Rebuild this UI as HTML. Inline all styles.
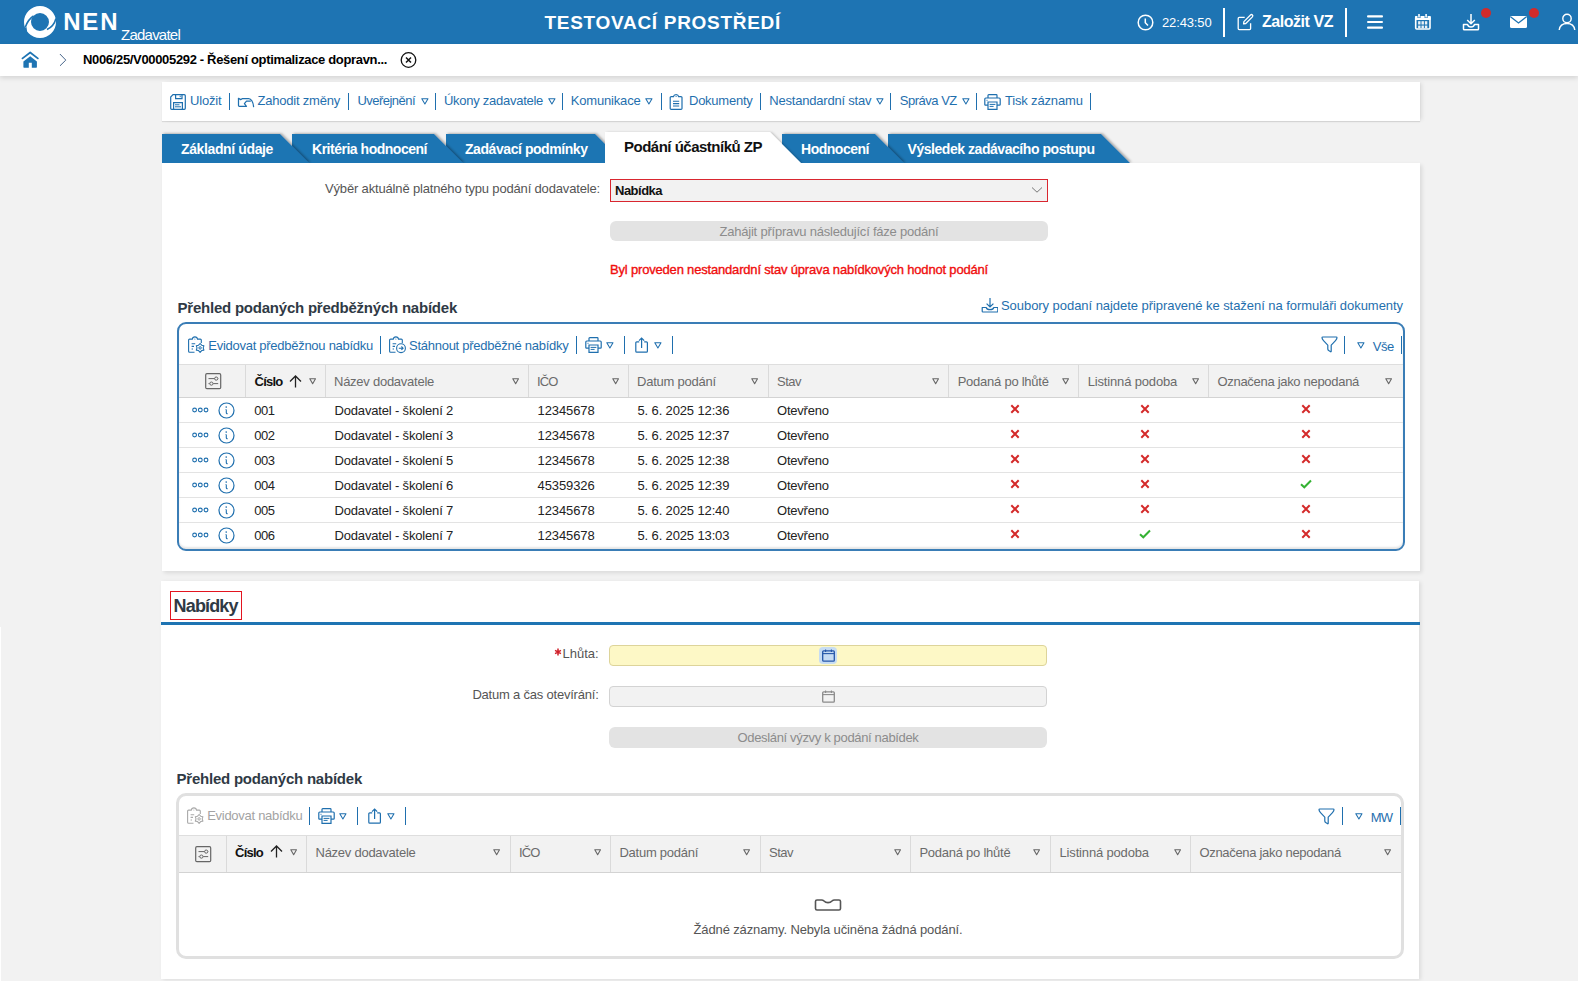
<!DOCTYPE html>
<html lang="cs"><head><meta charset="utf-8"><title>NEN</title>
<style>
html,body{margin:0;padding:0}
body{width:1578px;height:981px;overflow:hidden;position:relative;background:#f2f2f2;font-family:"Liberation Sans",sans-serif;}
.a{position:absolute;display:block}
.t{position:absolute;line-height:1;white-space:nowrap}
</style></head><body>
<div class="a" style="left:0px;top:0px;width:1578px;height:44px;background:#1e74b3"></div>
<svg class="a" style="left:22px;top:4px" width="36" height="36" viewBox="0 0 36 36"><circle cx="18" cy="18" r="12.5" fill="none" stroke="#fff" stroke-width="7"/>
<path d="M3.2 23.5 C5 18 7.5 14.5 11.5 12" fill="none" stroke="#1e74b3" stroke-width="1.6"/>
<path d="M34 14.5 C32.5 20 29.5 23.5 25 25.5" fill="none" stroke="#1e74b3" stroke-width="1.6"/>
<path d="M1.5 25 L4.5 23 L5.5 31 Z" fill="#1e74b3"/></svg>
<div class="t" style="left:63.2px;top:10px;font-size:24px;color:#fff;font-weight:bold;letter-spacing:1.8px;">NEN</div>
<div class="t" style="left:121.0px;top:27px;font-size:15px;color:#fff;letter-spacing:-0.764px;">Zadavatel</div>
<div class="t" style="left:544.5px;top:13px;font-size:19px;color:#fff;font-weight:bold;letter-spacing:0.705px;">TESTOVACÍ PROSTŘEDÍ</div>
<svg class="a" style="left:1137px;top:14px" width="17" height="17" viewBox="0 0 17 17"><circle cx="8.5" cy="8.5" r="7.3" fill="none" stroke="#fff" stroke-width="1.5"/><path d="M8.3 4.5 V8.7 L11 11.6" fill="none" stroke="#fff" stroke-width="1.5"/></svg>
<div class="t" style="left:1162.0px;top:16px;font-size:13px;color:#fff;letter-spacing:-0.138px;">22:43:50</div>
<div class="a" style="left:1223px;top:8px;width:2px;height:29px;background:#fff"></div>
<svg class="a" style="left:1232px;top:10px" width="26" height="24" viewBox="0 0 26 24"><path d="M12.7 7.4 H7.2 Q6.2 7.4 6.2 8.4 V18.6 Q6.2 19.6 7.2 19.6 H17.6 Q18.6 19.6 18.6 18.6 V13.2" fill="none" stroke="#fff" stroke-width="1.3"/><path d="M11.6 13.9 L11.9 11.6 L18.5 5 Q19.5 4.1 20.4 5 Q21.3 5.9 20.4 6.9 L13.8 13.5 Z" fill="none" stroke="#fff" stroke-width="1.3" stroke-linejoin="round"/></svg>
<div class="t" style="left:1262.0px;top:14px;font-size:16px;color:#fff;font-weight:bold;letter-spacing:-0.455px;">Založit VZ</div>
<div class="a" style="left:1345px;top:8px;width:2px;height:29px;background:#fff"></div>
<svg class="a" style="left:1367px;top:14px" width="17" height="16" viewBox="0 0 17 16"><rect x="0" y="1.2" width="16" height="2.2" rx="1" fill="#fff"/><rect x="0" y="6.9" width="16" height="2.2" rx="1" fill="#fff"/><rect x="0" y="12.6" width="16" height="2.2" rx="1" fill="#fff"/></svg>
<svg class="a" style="left:1410px;top:10px" width="26" height="24" viewBox="0 0 26 24"><rect x="5.7" y="6.7" width="14.3" height="12.3" rx="1" fill="none" stroke="#fff" stroke-width="1.6"/><rect x="5" y="6" width="15.8" height="4" rx="0.8" fill="#fff"/><path d="M9 3.8 V8 M16.1 3.8 V8" stroke="#1e74b3" stroke-width="3"/><path d="M9 3.9 V7.6 M16.1 3.9 V7.6" stroke="#fff" stroke-width="1.6"/><rect x="8.1" y="11.2" width="2.4" height="3.3" fill="#fff" opacity="0.9"/><rect x="8.1" y="15.6" width="2.4" height="2.6" fill="#fff" opacity="0.9"/><rect x="11.5" y="11.2" width="2.4" height="3.3" fill="#fff" opacity="0.9"/><rect x="11.5" y="15.6" width="2.4" height="2.6" fill="#fff" opacity="0.9"/><rect x="14.9" y="11.2" width="2.4" height="3.3" fill="#fff" opacity="0.9"/><rect x="14.9" y="15.6" width="2.4" height="2.6" fill="#fff" opacity="0.9"/></svg>
<svg class="a" style="left:1462px;top:13px" width="18" height="18" viewBox="0 0 18 18"><path d="M9 1 V10.5 M5.2 7 L9 10.8 L12.8 7" fill="none" stroke="#fff" stroke-width="1.5"/><path d="M1.5 11.5 V16 Q1.5 16.8 2.3 16.8 H15.7 Q16.5 16.8 16.5 16 V11.5 H12.5 Q11.8 14 9 14 Q6.2 14 5.5 11.5 Z" fill="none" stroke="#fff" stroke-width="1.5" stroke-linejoin="round"/></svg>
<svg class="a" style="left:1480px;top:7px" width="12" height="12" viewBox="0 0 12 12"><circle cx="6" cy="6" r="5" fill="#d12b2b"/></svg>
<svg class="a" style="left:1509px;top:15px" width="19" height="14" viewBox="0 0 19 14"><rect x="1" y="1" width="17" height="12" rx="1.5" fill="#fff"/><path d="M1.5 1.8 L9.5 8 L17.5 1.8" fill="none" stroke="#1e74b3" stroke-width="1.3"/></svg>
<svg class="a" style="left:1528px;top:7px" width="12" height="12" viewBox="0 0 12 12"><circle cx="6" cy="6" r="5" fill="#d12b2b"/></svg>
<svg class="a" style="left:1558px;top:13px" width="18" height="18" viewBox="0 0 18 18"><circle cx="9" cy="5.5" r="4.2" fill="none" stroke="#fff" stroke-width="1.4"/><path d="M1.2 17 Q2 10.5 9 10.5 Q16 10.5 16.8 17" fill="none" stroke="#fff" stroke-width="1.4"/></svg>
<div class="a" style="left:0px;top:44px;width:1578px;height:32px;background:#fff;box-shadow:0 2px 5px rgba(0,0,0,0.13)"></div>
<svg class="a" style="left:21px;top:50px" width="18" height="19" viewBox="0 0 18 19"><path d="M1.5 8.4 L9.2 2.5 L16.8 8.4" fill="none" stroke="#1e74b3" stroke-width="1.8" stroke-linecap="round" stroke-linejoin="round"/><path d="M2.4 11.4 L9.2 6.2 L15.9 11.4 V17.1 Q15.9 17.7 15.3 17.7 H10.8 V12.7 H7.8 V17.7 H3 Q2.4 17.7 2.4 17.1 Z" fill="#1e74b3"/></svg>
<svg class="a" style="left:58px;top:52px" width="10" height="16" viewBox="0 0 10 16"><path d="M1.9 2 L7.8 8.1 L2 13.8" fill="none" stroke="#46658a" stroke-width="1"/></svg>
<div class="t" style="left:83.0px;top:53px;font-size:13px;color:#000;font-weight:bold;letter-spacing:-0.336px;">N006/25/V00005292 - Řešení optimalizace dopravn...</div>
<svg class="a" style="left:400px;top:52px" width="17" height="17" viewBox="0 0 17 17"><circle cx="8.5" cy="8" r="7.3" fill="none" stroke="#111" stroke-width="1.3"/><path d="M6 5.5 L11 10.5 M11 5.5 L6 10.5" stroke="#111" stroke-width="1.5"/></svg>
<div class="a" style="left:162px;top:82px;width:1258px;height:39px;background:#fff;box-shadow:0 1px 1px rgba(0,0,0,0.10),3px 0 4px -1px rgba(0,0,0,0.09)"></div>
<div class="a" style="left:162px;top:163px;width:1258px;height:408px;background:#fff;box-shadow:2px 2px 4px rgba(0,0,0,0.10)"></div>
<div class="a" style="left:161px;top:581px;width:1258px;height:398px;background:#fff;box-shadow:2px 1px 4px rgba(0,0,0,0.09)"></div>
<div class="a" style="left:0px;top:627px;width:1px;height:354px;background:#fff"></div>
<svg class="a" style="left:170px;top:94px" width="16" height="16" viewBox="0 0 16 16"><path d="M3 0.7 H14.3 Q15.3 0.7 15.3 1.7 V14.3 Q15.3 15.3 14.3 15.3 H1.7 Q0.7 15.3 0.7 14.3 V3 Z" fill="none" stroke="#1f6fae" stroke-width="1.2"/><path d="M5.6 0.7 V4.6 H12 V0.7" fill="none" stroke="#1f6fae" stroke-width="1.2"/><path d="M10.2 1.6 V3.2" stroke="#1f6fae" stroke-width="1"/><path d="M3.6 15.3 V8.6 H12.4 V15.3" fill="none" stroke="#1f6fae" stroke-width="1.2"/><path d="M5 10.8 H9.5 M5 12.8 H11" stroke="#1f6fae" stroke-width="1"/></svg>
<div class="t" style="left:190.0px;top:94px;font-size:13px;color:#1f6fae;letter-spacing:-0.167px;">Uložit</div>
<div class="a" style="left:229px;top:93px;width:1.4px;height:17px;background:#1f6fae"></div>
<svg class="a" style="left:232px;top:90px" width="28" height="22" viewBox="0 0 28 22"><path d="M6.5 8.3 L8.6 9.6 L10.6 8.5 H16.5 Q20.8 9.3 21.6 16.6" fill="none" stroke="#1f6fae" stroke-width="1.25" stroke-linejoin="round" stroke-linecap="round"/><path d="M18.8 11.2 H14.5 L12.4 13.6 L14.5 16.3 H7.3 Q6.5 16.3 6.5 15.5 V8.3" fill="none" stroke="#1f6fae" stroke-width="1.25" stroke-linejoin="round"/></svg>
<div class="t" style="left:257.5px;top:94px;font-size:13px;color:#1f6fae;letter-spacing:-0.212px;">Zahodit změny</div>
<div class="a" style="left:348px;top:93px;width:1.4px;height:17px;background:#1f6fae"></div>
<div class="t" style="left:357.5px;top:94px;font-size:13px;color:#1f6fae;letter-spacing:-0.537px;">Uveřejnění</div>
<svg class="a" style="left:421px;top:98px" width="8" height="7" viewBox="0 0 8 7"><path d="M0.8 0.8 H7 L3.90 6 Z" fill="none" stroke="#1f6fae" stroke-width="1.05" stroke-linejoin="round"/></svg>
<div class="a" style="left:435px;top:93px;width:1.4px;height:17px;background:#1f6fae"></div>
<div class="t" style="left:444.0px;top:94px;font-size:13px;color:#1f6fae;letter-spacing:-0.271px;">Úkony zadavatele</div>
<svg class="a" style="left:548px;top:98px" width="8" height="7" viewBox="0 0 8 7"><path d="M0.8 0.8 H7 L3.90 6 Z" fill="none" stroke="#1f6fae" stroke-width="1.05" stroke-linejoin="round"/></svg>
<div class="a" style="left:562px;top:93px;width:1.4px;height:17px;background:#1f6fae"></div>
<div class="t" style="left:570.8px;top:94px;font-size:13px;color:#1f6fae;letter-spacing:-0.184px;">Komunikace</div>
<svg class="a" style="left:645px;top:98px" width="8" height="7" viewBox="0 0 8 7"><path d="M0.8 0.8 H7 L3.90 6 Z" fill="none" stroke="#1f6fae" stroke-width="1.05" stroke-linejoin="round"/></svg>
<div class="a" style="left:660.5px;top:93px;width:1.4px;height:17px;background:#1f6fae"></div>
<svg class="a" style="left:669px;top:94px" width="15" height="16" viewBox="0 0 15 16"><path d="M4.5 2.6 H2.2 Q1.2 2.6 1.2 3.6 V14.6 Q1.2 15.4 2.2 15.4 H12 Q13 15.4 13 14.6 V3.6 Q13 2.6 12 2.6 H9.6 Q9.3 0.6 7.1 0.6 Q4.8 0.6 4.5 2.6 Z" fill="none" stroke="#1f6fae" stroke-width="1.2"/><path d="M4 7.2 H10.2 M4 9.6 H10.2 M4 12 H10.2" stroke="#1f6fae" stroke-width="1.1"/><circle cx="7.1" cy="2.5" r="0.6" fill="#1f6fae"/></svg>
<div class="t" style="left:689.0px;top:94px;font-size:13px;color:#1f6fae;letter-spacing:-0.250px;">Dokumenty</div>
<div class="a" style="left:760px;top:93px;width:1.4px;height:17px;background:#1f6fae"></div>
<div class="t" style="left:769.3px;top:94px;font-size:13px;color:#1f6fae;letter-spacing:-0.206px;">Nestandardní stav</div>
<svg class="a" style="left:876px;top:98px" width="8" height="7" viewBox="0 0 8 7"><path d="M0.8 0.8 H7 L3.90 6 Z" fill="none" stroke="#1f6fae" stroke-width="1.05" stroke-linejoin="round"/></svg>
<div class="a" style="left:890px;top:93px;width:1.4px;height:17px;background:#1f6fae"></div>
<div class="t" style="left:899.8px;top:94px;font-size:13px;color:#1f6fae;letter-spacing:-0.490px;">Správa VZ</div>
<svg class="a" style="left:962px;top:98px" width="8" height="7" viewBox="0 0 8 7"><path d="M0.8 0.8 H7 L3.90 6 Z" fill="none" stroke="#1f6fae" stroke-width="1.05" stroke-linejoin="round"/></svg>
<div class="a" style="left:976px;top:93px;width:1.4px;height:17px;background:#1f6fae"></div>
<svg class="a" style="left:984px;top:94px" width="17" height="16" viewBox="0 0 17 16"><path d="M4 4 V1.5 Q4 0.7 4.8 0.7 H12.2 Q13 0.7 13 1.5 V4" fill="none" stroke="#1f6fae" stroke-width="1.2"/><path d="M4 11.2 H1.6 Q0.8 11.2 0.8 10.4 V5 Q0.8 4 1.8 4 H15.2 Q16.2 4 16.2 5 V10.4 Q16.2 11.2 15.4 11.2 H13" fill="none" stroke="#1f6fae" stroke-width="1.2"/><path d="M4 8 H13 V15.3 H4 Z" fill="none" stroke="#1f6fae" stroke-width="1.2"/><path d="M5.6 10.4 H11.4 M5.6 12.4 H9.6 M2.5 6.3 H3.5" stroke="#1f6fae" stroke-width="1"/></svg>
<div class="t" style="left:1005.0px;top:94px;font-size:13px;color:#1f6fae;letter-spacing:-0.167px;">Tisk záznamu</div>
<div class="a" style="left:1089.5px;top:93px;width:1.4px;height:17px;background:#1f6fae"></div>
<svg class="a" style="left:150px;top:124px" width="1000" height="39" viewBox="0 0 1000 39"><defs><filter id="ts" x="-10%" y="-30%" width="130%" height="160%"><feDropShadow dx="1.6" dy="-0.6" stdDeviation="1.1" flood-color="#000" flood-opacity="0.32"/></filter><filter id="ta" x="-10%" y="-30%" width="130%" height="160%"><feDropShadow dx="1.8" dy="0.3" stdDeviation="1" flood-color="#000" flood-opacity="0.22"/></filter></defs><polygon points="738,10 951,10 980,39 738,39" fill="#1e74b3" filter="url(#ts)"/><polygon points="632,10 725,10 754,39 632,39" fill="#1e74b3" filter="url(#ts)"/><polygon points="296,10 445,10 474,39 296,39" fill="#1e74b3" filter="url(#ts)"/><polygon points="142,10 284,10 313,39 142,39" fill="#1e74b3" filter="url(#ts)"/><polygon points="12,10 130,10 159,39 12,39" fill="#1e74b3" filter="url(#ts)"/><polygon points="455,8 620,8 651,39 455,39" fill="#fff" filter="url(#ta)"/></svg>
<div class="a" style="left:162px;top:163px;width:1258px;height:3px;background:#fff"></div>
<div class="t" style="left:181.0px;top:142px;font-size:14px;color:#fff;font-weight:bold;letter-spacing:-0.375px;">Základní údaje</div>
<div class="t" style="left:312.0px;top:142px;font-size:14px;color:#fff;font-weight:bold;letter-spacing:-0.482px;">Kritéria hodnocení</div>
<div class="t" style="left:465.0px;top:142px;font-size:14px;color:#fff;font-weight:bold;letter-spacing:-0.437px;">Zadávací podmínky</div>
<div class="t" style="left:801.0px;top:142px;font-size:14px;color:#fff;font-weight:bold;letter-spacing:-0.481px;">Hodnocení</div>
<div class="t" style="left:907.5px;top:142px;font-size:14px;color:#fff;font-weight:bold;letter-spacing:-0.451px;">Výsledek zadávacího postupu</div>
<div class="t" style="left:624.0px;top:139px;font-size:15px;color:#111;font-weight:bold;letter-spacing:-0.501px;">Podání účastníků ZP</div>
<div class="t" style="left:325.0px;top:181.5px;font-size:13px;color:#555;letter-spacing:-0.162px;">Výběr aktuálně platného typu podání dodavatele:</div>
<div class="a" style="left:610px;top:179px;width:438px;height:23px;background:#f2f2f2;border:1.5px solid #d9262f;box-sizing:border-box"></div>
<div class="t" style="left:615.0px;top:184px;font-size:13px;color:#111;font-weight:bold;letter-spacing:-0.510px;">Nabídka</div>
<svg class="a" style="left:1031px;top:186px" width="12" height="8" viewBox="0 0 12 8"><path d="M1 1.5 L6 6.2 L11 1.5" fill="none" stroke="#777" stroke-width="1"/></svg>
<div class="a" style="left:610px;top:221px;width:438px;height:20px;background:#e3e3e3;border-radius:6px"></div>
<div class="t" style="left:719.5px;top:224.5px;font-size:13px;color:#8c8c8c;letter-spacing:-0.216px;">Zahájit přípravu následující fáze podání</div>
<div class="t" style="left:610.0px;top:263px;font-size:13px;color:#f00d0d;letter-spacing:-0.183px;-webkit-text-stroke:0.35px #f00d0d;">Byl proveden nestandardní stav úprava nabídkových hodnot podání</div>
<div class="t" style="left:177.5px;top:300px;font-size:15px;color:#2f3a45;font-weight:bold;letter-spacing:-0.224px;">Přehled podaných předběžných nabídek</div>
<svg class="a" style="left:981px;top:297px" width="17" height="16" viewBox="0 0 17 16"><path d="M9 1 V9.8 M5.6 6.6 L9 10 L12.4 6.6" fill="none" stroke="#1f6fae" stroke-width="1.2"/><path d="M1.2 10.5 V14.2 Q1.2 15 2 15 H16 Q16.8 15 16.8 14.2 V10.5 H12.8 Q12.2 12.7 9 12.7 Q5.8 12.7 5.2 10.5 Z" fill="none" stroke="#1f6fae" stroke-width="1.2" stroke-linejoin="round"/></svg>
<div class="t" style="left:1001.0px;top:299px;font-size:13px;color:#1f6fae;letter-spacing:-0.051px;">Soubory podaní najdete připravené ke stažení na formuláři dokumenty</div>
<div class="a" style="left:177px;top:322px;width:1228px;height:229px;border:2px solid #3a7db6;border-radius:9px;box-sizing:border-box;background:#fff;box-shadow:inset 0 -2px 2px rgba(0,0,0,0.10)"></div>
<svg class="a" style="left:187.5px;top:336px" width="18" height="18" viewBox="0 0 18 18"><path d="M6.5 16.3 H1.6 Q0.6 16.3 0.6 15.3 V4.1 Q0.6 3.1 1.6 3.1 H4.3 Q4.6 0.9 6.9 0.9 Q9.2 0.9 9.5 3.1 H12.3 Q13.3 3.1 13.3 4.1 V7" fill="none" stroke="#1f6fae" stroke-width="1.1"/><circle cx="6.9" cy="2.9" r="0.5" fill="#1f6fae"/><path d="M3.6 7.7 H7.2 M3.6 10.4 H6 M3.6 13 H5" stroke="#1f6fae" stroke-width="1.1"/><polygon points="12.10,7.50 13.65,9.22 15.91,9.70 15.20,11.90 15.91,14.10 13.65,14.58 12.10,16.30 10.55,14.58 8.29,14.10 9.00,11.90 8.29,9.70 10.55,9.22" fill="#fff" stroke="#1f6fae" stroke-width="1.1" stroke-linejoin="round"/><circle cx="12.1" cy="11.9" r="1.2" fill="none" stroke="#1f6fae" stroke-width="1"/></svg>
<div class="t" style="left:208.3px;top:338.5px;font-size:13px;color:#1f6fae;letter-spacing:-0.271px;">Evidovat předběžnou nabídku</div>
<div class="a" style="left:380px;top:336px;width:1.4px;height:18px;background:#1f6fae"></div>
<svg class="a" style="left:388.5px;top:336px" width="18" height="18" viewBox="0 0 18 18"><path d="M6.5 16.3 H1.6 Q0.6 16.3 0.6 15.3 V4.1 Q0.6 3.1 1.6 3.1 H4.3 Q4.6 0.9 6.9 0.9 Q9.2 0.9 9.5 3.1 H12.3 Q13.3 3.1 13.3 4.1 V7" fill="none" stroke="#1f6fae" stroke-width="1.1"/><circle cx="6.9" cy="2.9" r="0.5" fill="#1f6fae"/><path d="M3.6 7.7 H7.2 M3.6 10.4 H6 M3.6 13 H5" stroke="#1f6fae" stroke-width="1.1"/><circle cx="12" cy="12.2" r="4.4" fill="#fff" stroke="#1f6fae" stroke-width="1.1"/><path d="M9.8 12.2 H14 M12.4 10.5 L14.1 12.2 L12.4 13.9" fill="none" stroke="#1f6fae" stroke-width="1.1"/></svg>
<div class="t" style="left:409.0px;top:338.5px;font-size:13px;color:#1f6fae;letter-spacing:-0.259px;">Stáhnout předběžné nabídky</div>
<div class="a" style="left:576px;top:336px;width:1.4px;height:18px;background:#1f6fae"></div>
<svg class="a" style="left:585px;top:337px" width="17" height="16" viewBox="0 0 17 16"><path d="M4 4 V1.5 Q4 0.7 4.8 0.7 H12.2 Q13 0.7 13 1.5 V4" fill="none" stroke="#1f6fae" stroke-width="1.2"/><path d="M4 11.2 H1.6 Q0.8 11.2 0.8 10.4 V5 Q0.8 4 1.8 4 H15.2 Q16.2 4 16.2 5 V10.4 Q16.2 11.2 15.4 11.2 H13" fill="none" stroke="#1f6fae" stroke-width="1.2"/><path d="M4 8 H13 V15.3 H4 Z" fill="none" stroke="#1f6fae" stroke-width="1.2"/><path d="M5.6 10.4 H11.4 M5.6 12.4 H9.6 M2.5 6.3 H3.5" stroke="#1f6fae" stroke-width="1"/></svg>
<svg class="a" style="left:606px;top:342px" width="8" height="7" viewBox="0 0 8 7"><path d="M0.8 0.8 H7 L3.90 6 Z" fill="none" stroke="#1f6fae" stroke-width="1.05" stroke-linejoin="round"/></svg>
<div class="a" style="left:624px;top:336px;width:1.4px;height:18px;background:#1f6fae"></div>
<svg class="a" style="left:634.5px;top:337px" width="14" height="16" viewBox="0 0 14 16"><path d="M4.2 4.8 H1.8 Q0.8 4.8 0.8 5.8 V14.2 Q0.8 15.2 1.8 15.2 H11.4 Q12.4 15.2 12.4 14.2 V5.8 Q12.4 4.8 11.4 4.8 H9.2" fill="none" stroke="#1f6fae" stroke-width="1.2"/><path d="M6.6 11 V1 M4 3.6 L6.6 1 L9.2 3.6" fill="none" stroke="#1f6fae" stroke-width="1.2"/></svg>
<svg class="a" style="left:653.5px;top:342px" width="8" height="7" viewBox="0 0 8 7"><path d="M0.8 0.8 H7 L3.90 6 Z" fill="none" stroke="#1f6fae" stroke-width="1.05" stroke-linejoin="round"/></svg>
<div class="a" style="left:672px;top:336px;width:1.4px;height:18px;background:#1f6fae"></div>
<svg class="a" style="left:1320.5px;top:336px" width="17" height="17" viewBox="0 0 17 17"><path d="M1 1.8 Q1 1 1.8 1 H15.2 Q16 1 16 1.8 Q16 3 14.5 4.6 L10.2 9.2 V15.2 Q10.2 16.2 9.3 15.6 L7.7 14.6 Q6.8 14 6.8 13 V9.2 L2.5 4.6 Q1 3 1 1.8 Z" fill="none" stroke="#1f6fae" stroke-width="1.2"/></svg>
<div class="a" style="left:1344px;top:336px;width:1.4px;height:18px;background:#1f6fae"></div>
<svg class="a" style="left:1357px;top:342px" width="8" height="7" viewBox="0 0 8 7"><path d="M0.8 0.8 H7 L3.90 6 Z" fill="none" stroke="#1f6fae" stroke-width="1.05" stroke-linejoin="round"/></svg>
<div class="t" style="left:1372.7px;top:340px;font-size:13px;color:#1f6fae;letter-spacing:-0.367px;">Vše</div>
<div class="a" style="left:1401px;top:336px;width:1.4px;height:18px;background:#1f6fae"></div>
<div class="a" style="left:179px;top:364px;width:1224px;height:34px;background:#f2f2f2;border-top:1px solid #dedede;border-bottom:1px solid #d3d3d3;box-sizing:border-box"></div>
<div class="a" style="left:245px;top:365px;width:1px;height:32px;background:#dadada"></div>
<div class="a" style="left:325px;top:365px;width:1px;height:32px;background:#dadada"></div>
<div class="a" style="left:528px;top:365px;width:1px;height:32px;background:#dadada"></div>
<div class="a" style="left:628px;top:365px;width:1px;height:32px;background:#dadada"></div>
<div class="a" style="left:768px;top:365px;width:1px;height:32px;background:#dadada"></div>
<div class="a" style="left:948px;top:365px;width:1px;height:32px;background:#dadada"></div>
<div class="a" style="left:1078px;top:365px;width:1px;height:32px;background:#dadada"></div>
<div class="a" style="left:1208px;top:365px;width:1px;height:32px;background:#dadada"></div>
<svg class="a" style="left:205px;top:373px" width="17" height="17" viewBox="0 0 17 17"><rect x="0.7" y="0.7" width="15" height="15" rx="1.2" fill="none" stroke="#666" stroke-width="1.2"/><path d="M3.5 5.6 H9.6 M13 5.6 H13.2 M3.5 10.6 H4.6 M8.2 10.6 H13.2" stroke="#666" stroke-width="1"/><circle cx="11.2" cy="5.6" r="1.6" fill="none" stroke="#666" stroke-width="1"/><circle cx="6.4" cy="10.6" r="1.6" fill="none" stroke="#666" stroke-width="1"/></svg>
<div class="t" style="left:254.5px;top:375px;font-size:13px;color:#111;font-weight:bold;letter-spacing:-0.757px;">Číslo</div>
<svg class="a" style="left:308.5px;top:378px" width="7.5" height="6.8" viewBox="0 0 7.5 6.8"><path d="M0.8 0.8 H6.5 L3.65 5.8 Z" fill="none" stroke="#666" stroke-width="1.1" stroke-linejoin="round"/></svg>
<div class="t" style="left:334.0px;top:375px;font-size:13px;color:#6b6b6b;letter-spacing:-0.254px;">Název dodavatele</div>
<svg class="a" style="left:511.7px;top:378px" width="7.5" height="6.8" viewBox="0 0 7.5 6.8"><path d="M0.8 0.8 H6.5 L3.65 5.8 Z" fill="none" stroke="#666" stroke-width="1.1" stroke-linejoin="round"/></svg>
<div class="t" style="left:537.0px;top:375px;font-size:13px;color:#6b6b6b;letter-spacing:-0.904px;">IČO</div>
<svg class="a" style="left:612px;top:378px" width="7.5" height="6.8" viewBox="0 0 7.5 6.8"><path d="M0.8 0.8 H6.5 L3.65 5.8 Z" fill="none" stroke="#666" stroke-width="1.1" stroke-linejoin="round"/></svg>
<div class="t" style="left:637.0px;top:375px;font-size:13px;color:#6b6b6b;letter-spacing:-0.239px;">Datum podání</div>
<svg class="a" style="left:751px;top:378px" width="7.5" height="6.8" viewBox="0 0 7.5 6.8"><path d="M0.8 0.8 H6.5 L3.65 5.8 Z" fill="none" stroke="#666" stroke-width="1.1" stroke-linejoin="round"/></svg>
<div class="t" style="left:777.0px;top:375px;font-size:13px;color:#6b6b6b;letter-spacing:-0.503px;">Stav</div>
<svg class="a" style="left:932px;top:378px" width="7.5" height="6.8" viewBox="0 0 7.5 6.8"><path d="M0.8 0.8 H6.5 L3.65 5.8 Z" fill="none" stroke="#666" stroke-width="1.1" stroke-linejoin="round"/></svg>
<div class="t" style="left:957.7px;top:375px;font-size:13px;color:#6b6b6b;letter-spacing:-0.246px;">Podaná po lhůtě</div>
<svg class="a" style="left:1061.6px;top:378px" width="7.5" height="6.8" viewBox="0 0 7.5 6.8"><path d="M0.8 0.8 H6.5 L3.65 5.8 Z" fill="none" stroke="#666" stroke-width="1.1" stroke-linejoin="round"/></svg>
<div class="t" style="left:1087.7px;top:375px;font-size:13px;color:#6b6b6b;letter-spacing:-0.160px;">Listinná podoba</div>
<svg class="a" style="left:1192px;top:378px" width="7.5" height="6.8" viewBox="0 0 7.5 6.8"><path d="M0.8 0.8 H6.5 L3.65 5.8 Z" fill="none" stroke="#666" stroke-width="1.1" stroke-linejoin="round"/></svg>
<div class="t" style="left:1217.5px;top:375px;font-size:13px;color:#6b6b6b;letter-spacing:-0.303px;">Označena jako nepodaná</div>
<svg class="a" style="left:1384.8px;top:378px" width="7.5" height="6.8" viewBox="0 0 7.5 6.8"><path d="M0.8 0.8 H6.5 L3.65 5.8 Z" fill="none" stroke="#666" stroke-width="1.1" stroke-linejoin="round"/></svg>
<svg class="a" style="left:288.5px;top:374.5px" width="13" height="13" viewBox="0 0 13 13"><path d="M6.5 12.5 V1 M1 6.5 L6.5 1 L12 6.5" fill="none" stroke="#222" stroke-width="1.3"/></svg>
<svg class="a" style="left:191.5px;top:407px" width="17" height="6" viewBox="0 0 17 6"><circle cx="2.6" cy="3" r="1.9" fill="none" stroke="#1f6fae" stroke-width="1.1"/><circle cx="8.3" cy="3" r="1.9" fill="none" stroke="#1f6fae" stroke-width="1.1"/><circle cx="14.0" cy="3" r="1.9" fill="none" stroke="#1f6fae" stroke-width="1.1"/></svg>
<svg class="a" style="left:217.5px;top:401.5px" width="17" height="17" viewBox="0 0 17 17"><circle cx="8.5" cy="8.5" r="7.5" fill="none" stroke="#1f6fae" stroke-width="1.2"/><circle cx="8.2" cy="5.1" r="0.8" fill="#1f6fae"/><path d="M7.6 7.6 Q8.2 7.3 8.3 8.2 V10.6 Q8.4 11.8 9.6 11.6" fill="none" stroke="#1f6fae" stroke-width="1.1"/></svg>
<div class="t" style="left:254.3px;top:404px;font-size:13px;color:#222;letter-spacing:-0.463px;">001</div>
<div class="t" style="left:334.5px;top:404px;font-size:13px;color:#222;letter-spacing:-0.168px;">Dodavatel - školení 2</div>
<div class="t" style="left:537.5px;top:404px;font-size:13px;color:#222;letter-spacing:-0.092px;">12345678</div>
<div class="t" style="left:637.5px;top:404px;font-size:13px;color:#222;letter-spacing:-0.136px;">5. 6. 2025 12:36</div>
<div class="t" style="left:777.0px;top:404px;font-size:13px;color:#222;letter-spacing:-0.222px;">Otevřeno</div>
<svg class="a" style="left:1009.5px;top:403.8px" width="10" height="10" viewBox="0 0 10 10"><path d="M1.3 1.3 L8.7 8.7 M8.7 1.3 L1.3 8.7" stroke="#d42a2a" stroke-width="2"/></svg>
<svg class="a" style="left:1139.5px;top:403.8px" width="10" height="10" viewBox="0 0 10 10"><path d="M1.3 1.3 L8.7 8.7 M8.7 1.3 L1.3 8.7" stroke="#d42a2a" stroke-width="2"/></svg>
<svg class="a" style="left:1301px;top:403.8px" width="10" height="10" viewBox="0 0 10 10"><path d="M1.3 1.3 L8.7 8.7 M8.7 1.3 L1.3 8.7" stroke="#d42a2a" stroke-width="2"/></svg>
<div class="a" style="left:179px;top:422px;width:1224px;height:1px;background:#e3e3e3"></div>
<svg class="a" style="left:191.5px;top:432px" width="17" height="6" viewBox="0 0 17 6"><circle cx="2.6" cy="3" r="1.9" fill="none" stroke="#1f6fae" stroke-width="1.1"/><circle cx="8.3" cy="3" r="1.9" fill="none" stroke="#1f6fae" stroke-width="1.1"/><circle cx="14.0" cy="3" r="1.9" fill="none" stroke="#1f6fae" stroke-width="1.1"/></svg>
<svg class="a" style="left:217.5px;top:426.5px" width="17" height="17" viewBox="0 0 17 17"><circle cx="8.5" cy="8.5" r="7.5" fill="none" stroke="#1f6fae" stroke-width="1.2"/><circle cx="8.2" cy="5.1" r="0.8" fill="#1f6fae"/><path d="M7.6 7.6 Q8.2 7.3 8.3 8.2 V10.6 Q8.4 11.8 9.6 11.6" fill="none" stroke="#1f6fae" stroke-width="1.1"/></svg>
<div class="t" style="left:254.3px;top:429px;font-size:13px;color:#222;letter-spacing:-0.463px;">002</div>
<div class="t" style="left:334.5px;top:429px;font-size:13px;color:#222;letter-spacing:-0.168px;">Dodavatel - školení 3</div>
<div class="t" style="left:537.5px;top:429px;font-size:13px;color:#222;letter-spacing:-0.092px;">12345678</div>
<div class="t" style="left:637.5px;top:429px;font-size:13px;color:#222;letter-spacing:-0.136px;">5. 6. 2025 12:37</div>
<div class="t" style="left:777.0px;top:429px;font-size:13px;color:#222;letter-spacing:-0.222px;">Otevřeno</div>
<svg class="a" style="left:1009.5px;top:428.8px" width="10" height="10" viewBox="0 0 10 10"><path d="M1.3 1.3 L8.7 8.7 M8.7 1.3 L1.3 8.7" stroke="#d42a2a" stroke-width="2"/></svg>
<svg class="a" style="left:1139.5px;top:428.8px" width="10" height="10" viewBox="0 0 10 10"><path d="M1.3 1.3 L8.7 8.7 M8.7 1.3 L1.3 8.7" stroke="#d42a2a" stroke-width="2"/></svg>
<svg class="a" style="left:1301px;top:428.8px" width="10" height="10" viewBox="0 0 10 10"><path d="M1.3 1.3 L8.7 8.7 M8.7 1.3 L1.3 8.7" stroke="#d42a2a" stroke-width="2"/></svg>
<div class="a" style="left:179px;top:447px;width:1224px;height:1px;background:#e3e3e3"></div>
<svg class="a" style="left:191.5px;top:457px" width="17" height="6" viewBox="0 0 17 6"><circle cx="2.6" cy="3" r="1.9" fill="none" stroke="#1f6fae" stroke-width="1.1"/><circle cx="8.3" cy="3" r="1.9" fill="none" stroke="#1f6fae" stroke-width="1.1"/><circle cx="14.0" cy="3" r="1.9" fill="none" stroke="#1f6fae" stroke-width="1.1"/></svg>
<svg class="a" style="left:217.5px;top:451.5px" width="17" height="17" viewBox="0 0 17 17"><circle cx="8.5" cy="8.5" r="7.5" fill="none" stroke="#1f6fae" stroke-width="1.2"/><circle cx="8.2" cy="5.1" r="0.8" fill="#1f6fae"/><path d="M7.6 7.6 Q8.2 7.3 8.3 8.2 V10.6 Q8.4 11.8 9.6 11.6" fill="none" stroke="#1f6fae" stroke-width="1.1"/></svg>
<div class="t" style="left:254.3px;top:454px;font-size:13px;color:#222;letter-spacing:-0.463px;">003</div>
<div class="t" style="left:334.5px;top:454px;font-size:13px;color:#222;letter-spacing:-0.168px;">Dodavatel - školení 5</div>
<div class="t" style="left:537.5px;top:454px;font-size:13px;color:#222;letter-spacing:-0.092px;">12345678</div>
<div class="t" style="left:637.5px;top:454px;font-size:13px;color:#222;letter-spacing:-0.136px;">5. 6. 2025 12:38</div>
<div class="t" style="left:777.0px;top:454px;font-size:13px;color:#222;letter-spacing:-0.222px;">Otevřeno</div>
<svg class="a" style="left:1009.5px;top:453.8px" width="10" height="10" viewBox="0 0 10 10"><path d="M1.3 1.3 L8.7 8.7 M8.7 1.3 L1.3 8.7" stroke="#d42a2a" stroke-width="2"/></svg>
<svg class="a" style="left:1139.5px;top:453.8px" width="10" height="10" viewBox="0 0 10 10"><path d="M1.3 1.3 L8.7 8.7 M8.7 1.3 L1.3 8.7" stroke="#d42a2a" stroke-width="2"/></svg>
<svg class="a" style="left:1301px;top:453.8px" width="10" height="10" viewBox="0 0 10 10"><path d="M1.3 1.3 L8.7 8.7 M8.7 1.3 L1.3 8.7" stroke="#d42a2a" stroke-width="2"/></svg>
<div class="a" style="left:179px;top:472px;width:1224px;height:1px;background:#e3e3e3"></div>
<svg class="a" style="left:191.5px;top:482px" width="17" height="6" viewBox="0 0 17 6"><circle cx="2.6" cy="3" r="1.9" fill="none" stroke="#1f6fae" stroke-width="1.1"/><circle cx="8.3" cy="3" r="1.9" fill="none" stroke="#1f6fae" stroke-width="1.1"/><circle cx="14.0" cy="3" r="1.9" fill="none" stroke="#1f6fae" stroke-width="1.1"/></svg>
<svg class="a" style="left:217.5px;top:476.5px" width="17" height="17" viewBox="0 0 17 17"><circle cx="8.5" cy="8.5" r="7.5" fill="none" stroke="#1f6fae" stroke-width="1.2"/><circle cx="8.2" cy="5.1" r="0.8" fill="#1f6fae"/><path d="M7.6 7.6 Q8.2 7.3 8.3 8.2 V10.6 Q8.4 11.8 9.6 11.6" fill="none" stroke="#1f6fae" stroke-width="1.1"/></svg>
<div class="t" style="left:254.3px;top:479px;font-size:13px;color:#222;letter-spacing:-0.463px;">004</div>
<div class="t" style="left:334.5px;top:479px;font-size:13px;color:#222;letter-spacing:-0.168px;">Dodavatel - školení 6</div>
<div class="t" style="left:537.5px;top:479px;font-size:13px;color:#222;letter-spacing:-0.092px;">45359326</div>
<div class="t" style="left:637.5px;top:479px;font-size:13px;color:#222;letter-spacing:-0.136px;">5. 6. 2025 12:39</div>
<div class="t" style="left:777.0px;top:479px;font-size:13px;color:#222;letter-spacing:-0.222px;">Otevřeno</div>
<svg class="a" style="left:1009.5px;top:478.8px" width="10" height="10" viewBox="0 0 10 10"><path d="M1.3 1.3 L8.7 8.7 M8.7 1.3 L1.3 8.7" stroke="#d42a2a" stroke-width="2"/></svg>
<svg class="a" style="left:1139.5px;top:478.8px" width="10" height="10" viewBox="0 0 10 10"><path d="M1.3 1.3 L8.7 8.7 M8.7 1.3 L1.3 8.7" stroke="#d42a2a" stroke-width="2"/></svg>
<svg class="a" style="left:1300px;top:479px" width="12" height="10" viewBox="0 0 12 10"><path d="M1 5.2 L4.3 8.3 L11 1.5" fill="none" stroke="#34b233" stroke-width="2"/></svg>
<div class="a" style="left:179px;top:497px;width:1224px;height:1px;background:#e3e3e3"></div>
<svg class="a" style="left:191.5px;top:507px" width="17" height="6" viewBox="0 0 17 6"><circle cx="2.6" cy="3" r="1.9" fill="none" stroke="#1f6fae" stroke-width="1.1"/><circle cx="8.3" cy="3" r="1.9" fill="none" stroke="#1f6fae" stroke-width="1.1"/><circle cx="14.0" cy="3" r="1.9" fill="none" stroke="#1f6fae" stroke-width="1.1"/></svg>
<svg class="a" style="left:217.5px;top:501.5px" width="17" height="17" viewBox="0 0 17 17"><circle cx="8.5" cy="8.5" r="7.5" fill="none" stroke="#1f6fae" stroke-width="1.2"/><circle cx="8.2" cy="5.1" r="0.8" fill="#1f6fae"/><path d="M7.6 7.6 Q8.2 7.3 8.3 8.2 V10.6 Q8.4 11.8 9.6 11.6" fill="none" stroke="#1f6fae" stroke-width="1.1"/></svg>
<div class="t" style="left:254.3px;top:504px;font-size:13px;color:#222;letter-spacing:-0.463px;">005</div>
<div class="t" style="left:334.5px;top:504px;font-size:13px;color:#222;letter-spacing:-0.168px;">Dodavatel - školení 7</div>
<div class="t" style="left:537.5px;top:504px;font-size:13px;color:#222;letter-spacing:-0.092px;">12345678</div>
<div class="t" style="left:637.5px;top:504px;font-size:13px;color:#222;letter-spacing:-0.136px;">5. 6. 2025 12:40</div>
<div class="t" style="left:777.0px;top:504px;font-size:13px;color:#222;letter-spacing:-0.222px;">Otevřeno</div>
<svg class="a" style="left:1009.5px;top:503.8px" width="10" height="10" viewBox="0 0 10 10"><path d="M1.3 1.3 L8.7 8.7 M8.7 1.3 L1.3 8.7" stroke="#d42a2a" stroke-width="2"/></svg>
<svg class="a" style="left:1139.5px;top:503.8px" width="10" height="10" viewBox="0 0 10 10"><path d="M1.3 1.3 L8.7 8.7 M8.7 1.3 L1.3 8.7" stroke="#d42a2a" stroke-width="2"/></svg>
<svg class="a" style="left:1301px;top:503.8px" width="10" height="10" viewBox="0 0 10 10"><path d="M1.3 1.3 L8.7 8.7 M8.7 1.3 L1.3 8.7" stroke="#d42a2a" stroke-width="2"/></svg>
<div class="a" style="left:179px;top:522px;width:1224px;height:1px;background:#e3e3e3"></div>
<svg class="a" style="left:191.5px;top:532px" width="17" height="6" viewBox="0 0 17 6"><circle cx="2.6" cy="3" r="1.9" fill="none" stroke="#1f6fae" stroke-width="1.1"/><circle cx="8.3" cy="3" r="1.9" fill="none" stroke="#1f6fae" stroke-width="1.1"/><circle cx="14.0" cy="3" r="1.9" fill="none" stroke="#1f6fae" stroke-width="1.1"/></svg>
<svg class="a" style="left:217.5px;top:526.5px" width="17" height="17" viewBox="0 0 17 17"><circle cx="8.5" cy="8.5" r="7.5" fill="none" stroke="#1f6fae" stroke-width="1.2"/><circle cx="8.2" cy="5.1" r="0.8" fill="#1f6fae"/><path d="M7.6 7.6 Q8.2 7.3 8.3 8.2 V10.6 Q8.4 11.8 9.6 11.6" fill="none" stroke="#1f6fae" stroke-width="1.1"/></svg>
<div class="t" style="left:254.3px;top:529px;font-size:13px;color:#222;letter-spacing:-0.463px;">006</div>
<div class="t" style="left:334.5px;top:529px;font-size:13px;color:#222;letter-spacing:-0.168px;">Dodavatel - školení 7</div>
<div class="t" style="left:537.5px;top:529px;font-size:13px;color:#222;letter-spacing:-0.092px;">12345678</div>
<div class="t" style="left:637.5px;top:529px;font-size:13px;color:#222;letter-spacing:-0.136px;">5. 6. 2025 13:03</div>
<div class="t" style="left:777.0px;top:529px;font-size:13px;color:#222;letter-spacing:-0.222px;">Otevřeno</div>
<svg class="a" style="left:1009.5px;top:528.8px" width="10" height="10" viewBox="0 0 10 10"><path d="M1.3 1.3 L8.7 8.7 M8.7 1.3 L1.3 8.7" stroke="#d42a2a" stroke-width="2"/></svg>
<svg class="a" style="left:1138.5px;top:529px" width="12" height="10" viewBox="0 0 12 10"><path d="M1 5.2 L4.3 8.3 L11 1.5" fill="none" stroke="#34b233" stroke-width="2"/></svg>
<svg class="a" style="left:1301px;top:528.8px" width="10" height="10" viewBox="0 0 10 10"><path d="M1.3 1.3 L8.7 8.7 M8.7 1.3 L1.3 8.7" stroke="#d42a2a" stroke-width="2"/></svg>
<div class="a" style="left:170px;top:591px;width:72px;height:29px;border:1px solid #e3141f;box-sizing:border-box"></div>
<div class="t" style="left:173.6px;top:597px;font-size:18px;color:#2f3a45;font-weight:bold;letter-spacing:-0.860px;">Nabídky</div>
<div class="a" style="left:161px;top:622px;width:1259px;height:3px;background:#1e74b3"></div>
<svg class="a" style="left:553.5px;top:648px" width="8" height="8" viewBox="0 0 8 8"><path d="M4 0.6 V7.4 M1.05 2.3 L6.95 5.7 M6.95 2.3 L1.05 5.7" stroke="#d0202a" stroke-width="1.5"/></svg>
<div class="t" style="left:562.6px;top:647px;font-size:13px;color:#555;letter-spacing:-0.024px;">Lhůta:</div>
<div class="a" style="left:609px;top:645px;width:438px;height:21px;background:#fdf8c6;border:1px solid #ddd49a;border-radius:4px;box-sizing:border-box"></div>
<div class="a" style="left:819px;top:647px;width:18px;height:17px;background:#c6dcf3;border-radius:4px"></div>
<svg class="a" style="left:822px;top:648.5px" width="13" height="13" viewBox="0 0 13 13"><rect x="0.7" y="1.8" width="11.6" height="10.4" rx="1" fill="#c6dcf3" stroke="#2456a8" stroke-width="1.3"/><path d="M0.7 4.6 H12.3" stroke="#2456a8" stroke-width="1.1"/><path d="M3.6 0.4 V3 M9.4 0.4 V3" stroke="#2456a8" stroke-width="1.1"/></svg>
<div class="t" style="left:472.4px;top:688px;font-size:13px;color:#555;letter-spacing:-0.208px;">Datum a čas otevírání:</div>
<div class="a" style="left:609px;top:686px;width:438px;height:21px;background:#f2f2f2;border:1px solid #d3d3d3;border-radius:4px;box-sizing:border-box"></div>
<svg class="a" style="left:822px;top:689.5px" width="13" height="13" viewBox="0 0 13 13"><rect x="0.7" y="1.8" width="11.6" height="10.4" rx="1" fill="none" stroke="#8a8a8a" stroke-width="1.3"/><path d="M0.7 4.6 H12.3" stroke="#8a8a8a" stroke-width="1.1"/><path d="M3.6 0.4 V3 M9.4 0.4 V3" stroke="#8a8a8a" stroke-width="1.1"/></svg>
<div class="a" style="left:609px;top:727px;width:438px;height:21px;background:#e3e3e3;border-radius:6px"></div>
<div class="t" style="left:737.5px;top:731px;font-size:13px;color:#8c8c8c;letter-spacing:-0.339px;">Odeslání výzvy k podání nabídek</div>
<div class="t" style="left:176.5px;top:771px;font-size:15px;color:#2f3a45;font-weight:bold;letter-spacing:-0.224px;">Přehled podaných nabídek</div>
<div class="a" style="left:176px;top:793px;width:1228px;height:166px;border:3px solid #e0e0e0;border-radius:10px;box-sizing:border-box;background:#fff"></div>
<svg class="a" style="left:186.5px;top:807px" width="18" height="18" viewBox="0 0 18 18"><path d="M6.5 16.3 H1.6 Q0.6 16.3 0.6 15.3 V4.1 Q0.6 3.1 1.6 3.1 H4.3 Q4.6 0.9 6.9 0.9 Q9.2 0.9 9.5 3.1 H12.3 Q13.3 3.1 13.3 4.1 V7" fill="none" stroke="#a9a9a9" stroke-width="1.1"/><circle cx="6.9" cy="2.9" r="0.5" fill="#a9a9a9"/><path d="M3.6 7.7 H7.2 M3.6 10.4 H6 M3.6 13 H5" stroke="#a9a9a9" stroke-width="1.1"/><polygon points="12.10,7.50 13.65,9.22 15.91,9.70 15.20,11.90 15.91,14.10 13.65,14.58 12.10,16.30 10.55,14.58 8.29,14.10 9.00,11.90 8.29,9.70 10.55,9.22" fill="#fff" stroke="#a9a9a9" stroke-width="1.1" stroke-linejoin="round"/><circle cx="12.1" cy="11.9" r="1.2" fill="none" stroke="#a9a9a9" stroke-width="1"/></svg>
<div class="t" style="left:207.2px;top:809px;font-size:13px;color:#a3a3a3;letter-spacing:-0.277px;">Evidovat nabídku</div>
<div class="a" style="left:309px;top:807px;width:1.4px;height:18px;background:#1f6fae"></div>
<svg class="a" style="left:318px;top:808px" width="17" height="16" viewBox="0 0 17 16"><path d="M4 4 V1.5 Q4 0.7 4.8 0.7 H12.2 Q13 0.7 13 1.5 V4" fill="none" stroke="#1f6fae" stroke-width="1.2"/><path d="M4 11.2 H1.6 Q0.8 11.2 0.8 10.4 V5 Q0.8 4 1.8 4 H15.2 Q16.2 4 16.2 5 V10.4 Q16.2 11.2 15.4 11.2 H13" fill="none" stroke="#1f6fae" stroke-width="1.2"/><path d="M4 8 H13 V15.3 H4 Z" fill="none" stroke="#1f6fae" stroke-width="1.2"/><path d="M5.6 10.4 H11.4 M5.6 12.4 H9.6 M2.5 6.3 H3.5" stroke="#1f6fae" stroke-width="1"/></svg>
<svg class="a" style="left:339.4px;top:813px" width="8" height="7" viewBox="0 0 8 7"><path d="M0.8 0.8 H7 L3.90 6 Z" fill="none" stroke="#1f6fae" stroke-width="1.05" stroke-linejoin="round"/></svg>
<div class="a" style="left:357px;top:807px;width:1.4px;height:18px;background:#1f6fae"></div>
<svg class="a" style="left:367.5px;top:808px" width="14" height="16" viewBox="0 0 14 16"><path d="M4.2 4.8 H1.8 Q0.8 4.8 0.8 5.8 V14.2 Q0.8 15.2 1.8 15.2 H11.4 Q12.4 15.2 12.4 14.2 V5.8 Q12.4 4.8 11.4 4.8 H9.2" fill="none" stroke="#1f6fae" stroke-width="1.2"/><path d="M6.6 11 V1 M4 3.6 L6.6 1 L9.2 3.6" fill="none" stroke="#1f6fae" stroke-width="1.2"/></svg>
<svg class="a" style="left:386.8px;top:813px" width="8" height="7" viewBox="0 0 8 7"><path d="M0.8 0.8 H7 L3.90 6 Z" fill="none" stroke="#1f6fae" stroke-width="1.05" stroke-linejoin="round"/></svg>
<div class="a" style="left:405px;top:807px;width:1.4px;height:18px;background:#1f6fae"></div>
<svg class="a" style="left:1318px;top:807.5px" width="17" height="17" viewBox="0 0 17 17"><path d="M1 1.8 Q1 1 1.8 1 H15.2 Q16 1 16 1.8 Q16 3 14.5 4.6 L10.2 9.2 V15.2 Q10.2 16.2 9.3 15.6 L7.7 14.6 Q6.8 14 6.8 13 V9.2 L2.5 4.6 Q1 3 1 1.8 Z" fill="none" stroke="#1f6fae" stroke-width="1.2"/></svg>
<div class="a" style="left:1342px;top:807px;width:1.4px;height:18px;background:#1f6fae"></div>
<svg class="a" style="left:1355px;top:813px" width="8" height="7" viewBox="0 0 8 7"><path d="M0.8 0.8 H7 L3.90 6 Z" fill="none" stroke="#1f6fae" stroke-width="1.05" stroke-linejoin="round"/></svg>
<div class="t" style="left:1370.8px;top:811px;font-size:13px;color:#1f6fae;letter-spacing:-0.800px;">MW</div>
<div class="a" style="left:1399.5px;top:807px;width:1.4px;height:18px;background:#1f6fae"></div>
<div class="a" style="left:179px;top:835px;width:1222px;height:38px;background:#f2f2f2;border-top:1px solid #dedede;border-bottom:1px solid #d3d3d3;box-sizing:border-box"></div>
<div class="a" style="left:226px;top:836px;width:1px;height:36px;background:#dadada"></div>
<div class="a" style="left:306px;top:836px;width:1px;height:36px;background:#dadada"></div>
<div class="a" style="left:510px;top:836px;width:1px;height:36px;background:#dadada"></div>
<div class="a" style="left:610px;top:836px;width:1px;height:36px;background:#dadada"></div>
<div class="a" style="left:760px;top:836px;width:1px;height:36px;background:#dadada"></div>
<div class="a" style="left:910px;top:836px;width:1px;height:36px;background:#dadada"></div>
<div class="a" style="left:1050px;top:836px;width:1px;height:36px;background:#dadada"></div>
<div class="a" style="left:1190px;top:836px;width:1px;height:36px;background:#dadada"></div>
<svg class="a" style="left:194.5px;top:846px" width="17" height="17" viewBox="0 0 17 17"><rect x="0.7" y="0.7" width="15" height="15" rx="1.2" fill="none" stroke="#666" stroke-width="1.2"/><path d="M3.5 5.6 H9.6 M13 5.6 H13.2 M3.5 10.6 H4.6 M8.2 10.6 H13.2" stroke="#666" stroke-width="1"/><circle cx="11.2" cy="5.6" r="1.6" fill="none" stroke="#666" stroke-width="1"/><circle cx="6.4" cy="10.6" r="1.6" fill="none" stroke="#666" stroke-width="1"/></svg>
<div class="t" style="left:235.0px;top:846px;font-size:13px;color:#111;font-weight:bold;letter-spacing:-0.757px;">Číslo</div>
<svg class="a" style="left:289.7px;top:849px" width="7.5" height="6.8" viewBox="0 0 7.5 6.8"><path d="M0.8 0.8 H6.5 L3.65 5.8 Z" fill="none" stroke="#666" stroke-width="1.1" stroke-linejoin="round"/></svg>
<div class="t" style="left:315.5px;top:846px;font-size:13px;color:#6b6b6b;letter-spacing:-0.254px;">Název dodavatele</div>
<svg class="a" style="left:493px;top:849px" width="7.5" height="6.8" viewBox="0 0 7.5 6.8"><path d="M0.8 0.8 H6.5 L3.65 5.8 Z" fill="none" stroke="#666" stroke-width="1.1" stroke-linejoin="round"/></svg>
<div class="t" style="left:519.0px;top:846px;font-size:13px;color:#6b6b6b;letter-spacing:-0.904px;">IČO</div>
<svg class="a" style="left:593.5px;top:849px" width="7.5" height="6.8" viewBox="0 0 7.5 6.8"><path d="M0.8 0.8 H6.5 L3.65 5.8 Z" fill="none" stroke="#666" stroke-width="1.1" stroke-linejoin="round"/></svg>
<div class="t" style="left:619.4px;top:846px;font-size:13px;color:#6b6b6b;letter-spacing:-0.239px;">Datum podání</div>
<svg class="a" style="left:743.3px;top:849px" width="7.5" height="6.8" viewBox="0 0 7.5 6.8"><path d="M0.8 0.8 H6.5 L3.65 5.8 Z" fill="none" stroke="#666" stroke-width="1.1" stroke-linejoin="round"/></svg>
<div class="t" style="left:769.0px;top:846px;font-size:13px;color:#6b6b6b;letter-spacing:-0.503px;">Stav</div>
<svg class="a" style="left:893.6px;top:849px" width="7.5" height="6.8" viewBox="0 0 7.5 6.8"><path d="M0.8 0.8 H6.5 L3.65 5.8 Z" fill="none" stroke="#666" stroke-width="1.1" stroke-linejoin="round"/></svg>
<div class="t" style="left:919.4px;top:846px;font-size:13px;color:#6b6b6b;letter-spacing:-0.246px;">Podaná po lhůtě</div>
<svg class="a" style="left:1033.4px;top:849px" width="7.5" height="6.8" viewBox="0 0 7.5 6.8"><path d="M0.8 0.8 H6.5 L3.65 5.8 Z" fill="none" stroke="#666" stroke-width="1.1" stroke-linejoin="round"/></svg>
<div class="t" style="left:1059.5px;top:846px;font-size:13px;color:#6b6b6b;letter-spacing:-0.160px;">Listinná podoba</div>
<svg class="a" style="left:1173.5px;top:849px" width="7.5" height="6.8" viewBox="0 0 7.5 6.8"><path d="M0.8 0.8 H6.5 L3.65 5.8 Z" fill="none" stroke="#666" stroke-width="1.1" stroke-linejoin="round"/></svg>
<div class="t" style="left:1199.4px;top:846px;font-size:13px;color:#6b6b6b;letter-spacing:-0.303px;">Označena jako nepodaná</div>
<svg class="a" style="left:1383.5px;top:849px" width="7.5" height="6.8" viewBox="0 0 7.5 6.8"><path d="M0.8 0.8 H6.5 L3.65 5.8 Z" fill="none" stroke="#666" stroke-width="1.1" stroke-linejoin="round"/></svg>
<svg class="a" style="left:269.5px;top:845px" width="13" height="13" viewBox="0 0 13 13"><path d="M6.5 12.5 V1 M1 6.5 L6.5 1 L12 6.5" fill="none" stroke="#222" stroke-width="1.3"/></svg>
<svg class="a" style="left:814px;top:899px" width="28" height="12" viewBox="0 0 28 12"><path d="M1.5 2.5 Q1.5 1 3 1 H7.5 Q9 1 10 2 Q11.5 3.6 14 3.6 Q16.5 3.6 18 2 Q19 1 20.5 1 H25 Q26.5 1 26.5 2.5 V9.5 Q26.5 11 25 11 H3 Q1.5 11 1.5 9.5 Z" fill="none" stroke="#555" stroke-width="1.6"/></svg>
<div class="t" style="left:693.5px;top:923px;font-size:13px;color:#555;letter-spacing:-0.125px;">Žádné záznamy. Nebyla učiněna žádná podání.</div>
</body></html>
